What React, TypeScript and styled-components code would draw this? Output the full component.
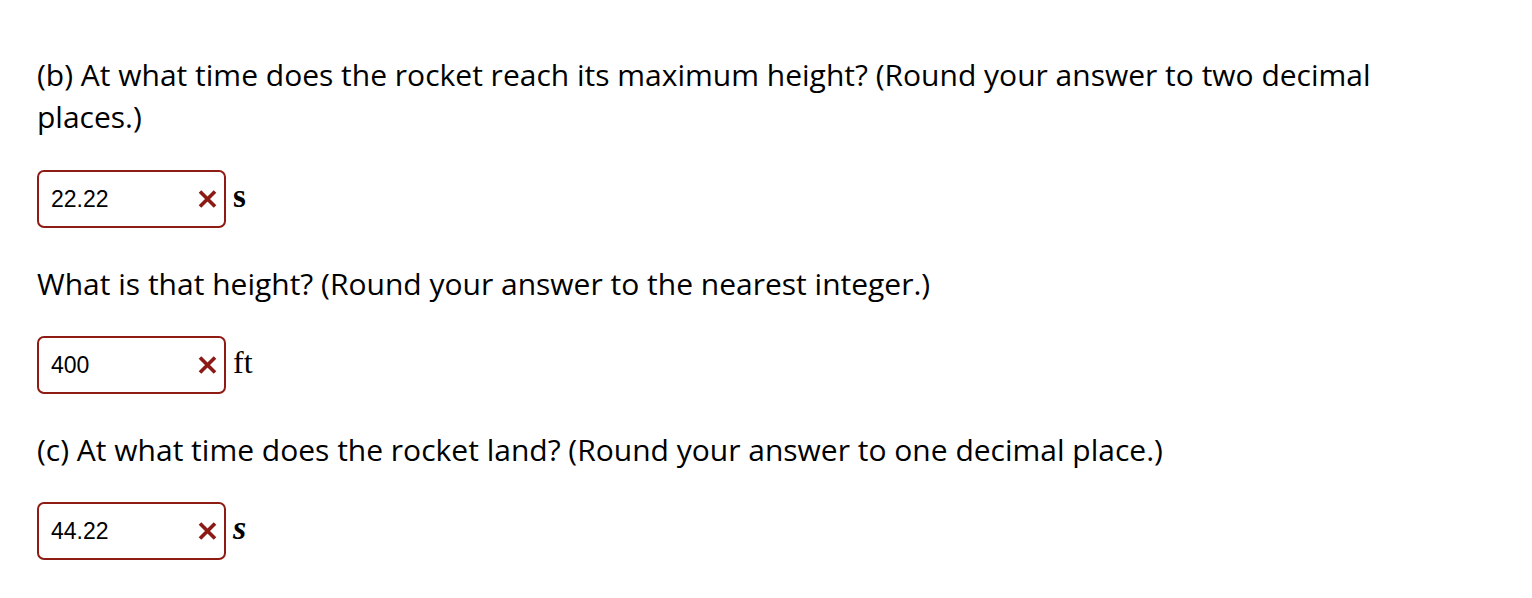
import React from "react";
import styled, { createGlobalStyle } from "styled-components";

const Global = createGlobalStyle`
  html, body { margin: 0; padding: 0; background: #ffffff; }
`;

const Page = styled.div`
  padding: 54px 0 0 37px;
  width: 1400px;
  font-family: "Open Sans", "Noto Sans", sans-serif;
  color: #000;
`;

const Question = styled.p`
  margin: 0;
  font-size: 30px;
  line-height: 42px;
`;

const AnswerRow = styled.div<{ $top: number; $bottom: number }>`
  display: flex;
  align-items: center;
  gap: 7px;
  margin: ${(p) => p.$top}px 0 ${(p) => p.$bottom}px;
`;

const Field = styled.div`
  box-sizing: border-box;
  width: 189px;
  height: 58px;
  border: 2px solid #8e1c14;
  border-radius: 7px;
  display: flex;
  align-items: center;
  justify-content: space-between;
  padding: 0 7px 0 12px;
`;

const Value = styled.span`
  font-family: "Liberation Sans", Arial, sans-serif;
  font-size: 23px;
  color: #000;
`;

const Unit = styled.span<{ $italic?: boolean; $bold?: boolean; $size: number }>`
  font-family: "Liberation Serif", "Times New Roman", serif;
  font-size: ${(p) => p.$size}px;
  font-style: ${(p) => (p.$italic ? "italic" : "normal")};
  font-weight: ${(p) => (p.$bold ? 700 : 400)};
  margin-top: -6px;
`;

const Cross = () => (
  <svg width="19" height="18" viewBox="0 0 19 18" aria-hidden>
    <path d="M2 1.5 L17 16.5 M17 1.5 L2 16.5" stroke="#8b1a12" strokeWidth="3.6" strokeLinecap="butt" />
  </svg>
);

const Answer = ({ value, unit, italic, bold, size, top, bottom }: { value: string; unit: string; italic?: boolean; bold?: boolean; size: number; top: number; bottom: number }) => (
  <AnswerRow $top={top} $bottom={bottom}>
    <Field>
      <Value>{value}</Value>
      <Cross />
    </Field>
    <Unit $italic={italic} $bold={bold} $size={size}>{unit}</Unit>
  </AnswerRow>
);

export default function App() {
  return (
    <Page>
      <Global />
      <Question>
        (b) At what time does the rocket reach its maximum height? (Round your answer to two decimal places.)
      </Question>
      <Answer value="22.22" unit="s" size={33} bold top={32} bottom={35} />
      <Question>What is that height? (Round your answer to the nearest integer.)</Question>
      <Answer value="400" unit="ft" size={32} top={31} bottom={35} />
      <Question>(c) At what time does the rocket land? (Round your answer to one decimal place.)</Question>
      <Answer value="44.22" unit="s" size={34} italic bold top={31} bottom={0} />
    </Page>
  );
}
